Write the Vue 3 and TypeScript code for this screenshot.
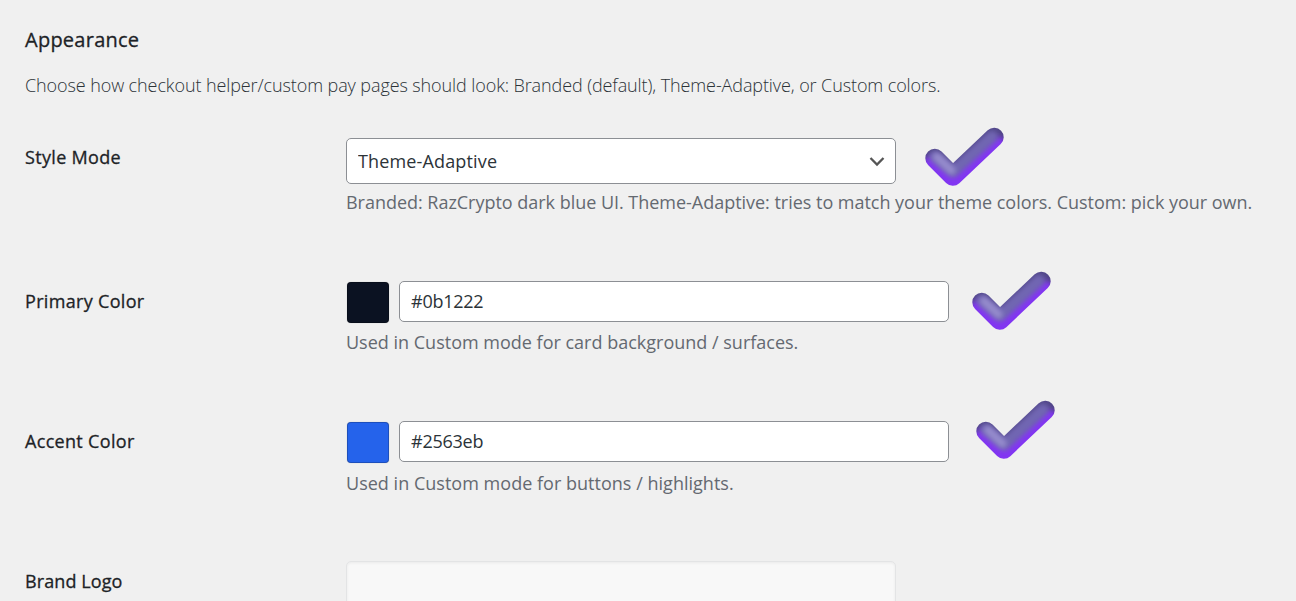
<script setup lang="ts">
import { ref } from 'vue'

interface ColorRow {
  key: string
  label: string
  value: string
  help: string
}

const mode = ref('Theme-Adaptive')
const modes = ['Branded', 'Theme-Adaptive', 'Custom']
const colors = ref<ColorRow[]>([
  { key: 'primary', label: 'Primary Color', value: '#0b1222', help: 'Used in Custom mode for card background / surfaces.' },
  { key: 'accent', label: 'Accent Color', value: '#2563eb', help: 'Used in Custom mode for buttons / highlights.' },
])
</script>

<template>
  <main class="page">
    <svg class="defs" width="0" height="0" aria-hidden="true">
      <defs>
        <filter id="soft" filterUnits="userSpaceOnUse" x="-20" y="-20" width="120" height="110">
          <feGaussianBlur stdDeviation="2.6" />
        </filter>
        <mask id="tick-mask" maskUnits="userSpaceOnUse" x="0" y="0" width="80" height="60">
          <path d="M9.8 31.3 27.8 49.3 69.2 10.2" fill="none" stroke="#fff" stroke-width="19" stroke-linecap="round" stroke-linejoin="round" />
        </mask>
        <symbol id="tick" viewBox="0 0 80 60">
          <g mask="url(#tick-mask)" fill="none" stroke-linecap="round" stroke-linejoin="round">
            <rect width="80" height="60" fill="#504588" />
            <path d="M6.500 38 27.800 59 73 19" stroke="#8236f2" stroke-width="18" filter="url(#soft)" />
            <path d="M10 29.500 28 44.500 67 9.500" stroke="#7166b2" stroke-width="12" filter="url(#soft)" />
            <path d="M12 30 26.500 43.500" stroke="#968ccd" stroke-width="8" filter="url(#soft)" />
          </g>
        </symbol>
      </defs>
    </svg>

    <h2 class="title">Appearance</h2>
    <p class="intro">Choose how checkout helper/custom pay pages should look: Branded (default), Theme-Adaptive, or Custom colors.</p>

    <section class="row mode">
      <label class="label">Style Mode</label>
      <div class="field">
        <div class="control">
          <div class="select-wrap">
            <select v-model="mode" class="box select">
              <option v-for="m in modes" :key="m">{{ m }}</option>
            </select>
            <svg class="chevron" width="16" height="12" viewBox="0 0 16 12"><path d="M1.500 2 8 8.500 14.500 2" fill="none" stroke="#555" stroke-width="2.300" /></svg>
          </div>
          <svg class="tick" width="80" height="60"><use href="#tick" /></svg>
        </div>
        <p class="help">Branded: RazCrypto dark blue UI. Theme-Adaptive: tries to match your theme colors. Custom: pick your own.</p>
      </div>
    </section>

    <section v-for="c in colors" :key="c.key" class="row" :class="c.key">
      <label class="label">{{ c.label }}</label>
      <div class="field">
        <div class="control">
          <span class="swatch" :style="{ backgroundColor: c.value }"></span>
          <input v-model="c.value" class="box input" type="text" spellcheck="false" />
          <svg class="tick" width="80" height="60"><use href="#tick" /></svg>
        </div>
        <p class="help">{{ c.help }}</p>
      </div>
    </section>

    <section class="row logo">
      <label class="label">Brand Logo</label>
      <div class="field"><input class="box disabled" type="text" disabled /></div>
    </section>
  </main>
</template>

<style>
body {
  background: #f0f0f0;
  overflow: hidden;
}
</style>

<style scoped>
.page {
  box-sizing: border-box;
  height: 601px;
  overflow: hidden;
  padding: 27px 0 0 25px;
  background: #f0f0f0;
  color: #1d2327;
  font-family: "Open Sans", "Noto Sans", sans-serif;
  font-size: 18px;
  line-height: 24px;
}
.defs { position: absolute; }
.title {
  margin: 0;
  font-size: 20px;
  font-weight: 500;
  letter-spacing: 0.25px;
  line-height: 26px;
  -webkit-text-stroke: 0.3px #1d2327;
}
.intro {
  margin: 20px 0 41px;
  height: 24px;
  color: #2c3338;
  font-weight: 300;
  letter-spacing: -0.1px;
  white-space: nowrap;
}
.row {
  display: grid;
  grid-template-columns: 321px 1fr;
  height: 140px;
}
.row.mode { height: 143px; }
.label {
  padding-top: 8px;
  font-weight: 500;
  letter-spacing: 0.32px;
  -webkit-text-stroke: 0.3px #1d2327;
}
.logo .label { letter-spacing: 0.1px; }
.mode .label { padding-top: 7px; }
.control {
  display: flex;
  align-items: flex-start;
  height: 41px;
}
.mode .control { height: 46px; }
.box {
  box-sizing: border-box;
  width: 550px;
  height: 41px;
  margin: 0;
  padding: 0 11px;
  border: 1px solid #8c8f94;
  border-radius: 5px;
  background: #fff;
  color: #2c3338;
  font: inherit;
}
.input {
  padding-bottom: 2px;
  letter-spacing: -0.25px;
}
.select-wrap {
  position: relative;
  height: 46px;
}
.select {
  height: 46px;
  appearance: none;
  letter-spacing: 0.15px;
}
.chevron {
  position: absolute;
  right: 11px;
  top: 18px;
}
.swatch {
  box-sizing: border-box;
  width: 42px;
  height: 41px;
  margin: 1px 10px 0 1px;
  border: 1px solid rgba(0, 0, 0, 0.2);
  border-radius: 4px;
  box-shadow: 0 0 1px rgba(0, 0, 0, 0.3);
}
.tick {
  flex: none;
  margin: -11px 0 0 29px;
}
.primary .tick { margin: -10px 0 0 22.5px; }
.accent .tick { margin: -21px 0 0 27px; }
.help {
  margin: 6px 0 0;
  color: #646970;
  letter-spacing: -0.025px;
  white-space: nowrap;
}
.primary .help {
  margin-top: 8px;
  letter-spacing: 0;
}
.accent .help {
  margin-top: 9px;
  letter-spacing: 0.02px;
}
.disabled {
  height: 46px;
  border-color: #e3e4e5;
  background: #f8f8f8;
  box-shadow: inset 0 1px 3px rgba(0, 0, 0, 0.06);
}
</style>
